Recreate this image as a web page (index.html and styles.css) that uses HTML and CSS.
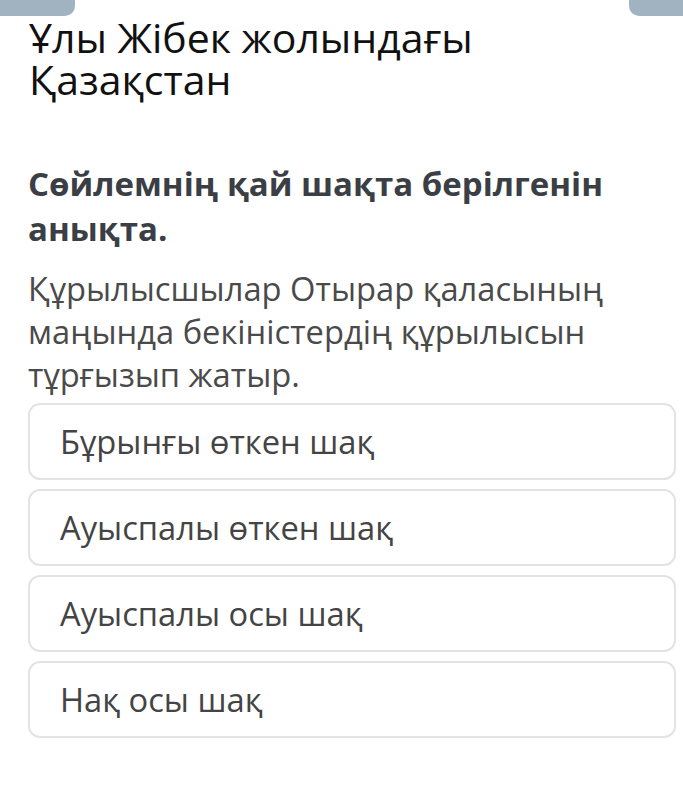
FILE: index.html
```html
<!DOCTYPE html>
<html lang="kk">
<head>
<meta charset="utf-8">
<title>Ұлы Жібек жолындағы Қазақстан</title>
<link rel="stylesheet" href="styles.css">
</head>
<body>
<div class="topbar">
  <div class="tab tab-left"></div>
  <div class="tab tab-right"></div>
</div>
<main class="page">
  <h1 class="title">Ұлы Жібек жолындағы Қазақстан</h1>
  <h2 class="question">Сөйлемнің қай шақта берілгенін анықта.</h2>
  <p class="sentence">Құрылысшылар Отырар қаласының маңында бекіністердің құрылысын тұрғызып жатыр.</p>
  <div class="options">
    <div class="option">Бұрынғы өткен шақ</div>
    <div class="option">Ауыспалы өткен шақ</div>
    <div class="option">Ауыспалы осы шақ</div>
    <div class="option">Нақ осы шақ</div>
  </div>
</main>
</body>
</html>
```
FILE: styles.css
```css
* { box-sizing: border-box; }
html, body { margin: 0; padding: 0; background: #fff; }
body {
  font-family: "Open Sans", "Noto Sans", sans-serif;
  color: #444;
  width: 683px;
}
.topbar {
  display: flex;
  justify-content: space-between;
  height: 16px;
}
.tab {
  height: 16px;
  background: #a1b3c0;
}
.tab-left { width: 75px; border-bottom-right-radius: 10px; }
.tab-right { width: 54px; border-bottom-left-radius: 10px; }
.page {
  padding: 0 7px 0 28px;
}
.title {
  margin: 0;
  font-weight: 400;
  font-size: 41px;
  line-height: 42px;
  color: #111;
  padding-left: 1px;
  width: 500px;
}
.question {
  margin: 61px 0 0;
  font-weight: 700;
  font-size: 33px;
  line-height: 45px;
  color: #3b3f45;
}
.sentence {
  margin: 16px 0 0;
  font-size: 32.7px;
  line-height: 43px;
  color: #4a4a4a;
}
.options {
  margin-top: 7px;
  display: flex;
  flex-direction: column;
  gap: 9px;
}
.option {
  border: 2px solid #e3e3e3;
  border-radius: 12px;
  padding: 15px 30px 15px;
  font-size: 32.7px;
  line-height: 43px;
  color: #444;
}
```
